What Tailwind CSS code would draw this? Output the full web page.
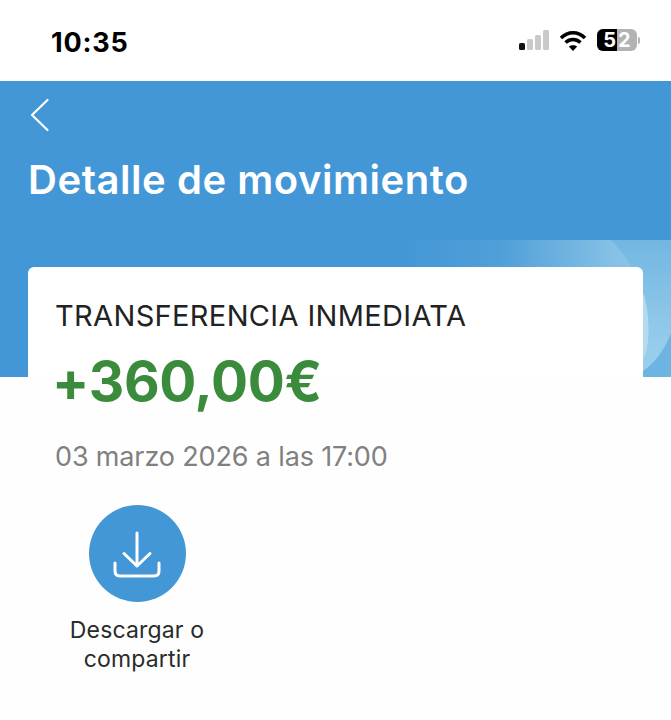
<!DOCTYPE html>
<html lang="es">
<head>
<meta charset="utf-8">
<script src="https://cdn.jsdelivr.net/npm/@tailwindcss/browser@4"></script>
</head>
<body class="bg-[#fefefe] font-['Inter',sans-serif]">
<div class="w-[671px] h-[720px] overflow-hidden flex flex-col">
  <div class="h-[81px] bg-white flex items-start justify-between pl-[51px] pr-[30px] pt-[26px]">
    <span class="text-[27px] leading-[33px] font-bold text-black tracking-[0.8px]">10:35</span>
    <div class="flex items-center gap-[10px] pt-[3px] mr-[1px]">
      <svg width="30" height="20" viewBox="0 0 30 20"><rect x="0" y="13" width="6" height="7" rx="1.5" fill="#111"/><rect x="8" y="9" width="6" height="11" rx="1.5" fill="#c9c9c9"/><rect x="16" y="5" width="6" height="15" rx="1.5" fill="#c9c9c9"/><rect x="24" y="0" width="6" height="20" rx="1.5" fill="#c9c9c9"/></svg>
      <svg width="28" height="21" viewBox="0 0 28 21" fill="none" stroke="#000" stroke-width="3.6"><path d="M2 8 C9 1 19 1 26 8"/><path d="M6.5 12.5 C11 8.5 17 8.5 21.5 12.5"/><path d="M14 21 L9.8 16.6 C12 14.8 16 14.8 18.2 16.6 Z" fill="#000" stroke="none"/></svg>
      <div class="flex items-center">
        <div class="w-[40px] h-[22px] rounded-[6px] overflow-hidden flex bg-[#b3b3b3] text-[20px] leading-[22px] font-bold">
          <span class="w-[20px] bg-black text-white text-right pr-[1px]">5</span>
          <span class="text-white pl-[1px]">2</span>
        </div>
        <div class="ml-[1px] w-[2px] h-[7px] rounded-r-full bg-[#b3b3b3]"></div>
      </div>
    </div>
  </div>

  <div class="relative h-[296px] shrink-0 bg-[#4497d6] overflow-hidden">
    <svg class="absolute left-0 top-0" width="671" height="296" viewBox="0 0 671 296">
      <defs>
        <linearGradient id="a" gradientUnits="userSpaceOnUse" x1="400" x2="620" y1="0" y2="0"><stop offset="0" stop-color="#4497d6"/><stop offset="0.45" stop-color="#4f9fd8"/><stop offset="1" stop-color="#88c3e6"/></linearGradient>
        <linearGradient id="b" gradientUnits="userSpaceOnUse" x1="0" x2="0" y1="159" y2="270"><stop offset="0" stop-color="#72b7e1"/><stop offset="1" stop-color="#98cdec"/></linearGradient>
      </defs>
      <path d="M376 240 Q378 160 412 159 L671 159 L671 296 L376 296 Z" fill="url(#a)"/>
      <path d="M643 190 C646 205 647 220 648 235 C650 255 648 270 642 282 L640 296 L640 190 Z" fill="#b4daf0"/>
      <path d="M611 159 C630 178 645 205 648 235 C650 255 648 270 642 282 L638 296 L671 296 L671 159 Z" fill="url(#b)"/>
      <path d="M643 290 C655 282 665 268 671 252 L671 296 L643 296 Z" fill="#6db4e2"/>
    </svg>
    <svg class="absolute left-[29px] top-[17px]" width="22" height="34" viewBox="0 0 22 34" fill="none" stroke="#fff" stroke-width="2.2" stroke-linecap="round" stroke-linejoin="round"><path d="M18.5 2 L3 17 L18.5 32"/></svg>
    <h1 class="absolute left-[28px] top-[75px] text-[40px] leading-[48px] font-semibold text-white tracking-[0.55px] whitespace-nowrap">Detalle de movimiento</h1>
  </div>

  <div class="relative -mt-[110px] mx-[28px] rounded-t-[6px] bg-white px-[28px] pt-[30px] h-[110px] shrink-0">
    <p class="-ml-[1px] text-[29px] leading-[38px] text-[#222] whitespace-nowrap tracking-[0.35px]">TRANSFERENCIA INMEDIATA</p>
  </div>

  <div class="flex-1 pl-[56px]">
    <p class="-ml-[4px] -mt-[26px] relative text-[55px] leading-[60px] font-bold text-[#3a8c3c] whitespace-nowrap -tracking-[0.3px]">+360,00€</p>
    <p class="-ml-[1px] mt-[29px] text-[27px] leading-[34px] text-[#808080] whitespace-nowrap -tracking-[0.15px]">03 marzo 2026 a las 17:00</p>
    <div class="mt-[31px] w-[164px] -ml-[1px] flex flex-col items-center">
      <div class="w-[97px] h-[97px] rounded-full bg-[#4497d6] flex items-center justify-center">
        <svg width="48" height="48" viewBox="0 0 48 48" fill="none" stroke="#fff" stroke-width="3" stroke-linecap="round" stroke-linejoin="round"><path d="M24 3 V35.5"/><path d="M11 23.5 L24 36 L37 23.5"/><path d="M2 33 V41 Q2 46 7 46 H41 Q46 46 46 41 V33"/></svg>
      </div>
      <p class="mt-[14px] text-center text-[23px] leading-[29px] text-[#2b2b2b] whitespace-nowrap tracking-[0.15px]">Descargar o<br>compartir</p>
    </div>
  </div>
</div>
</body>
</html>
